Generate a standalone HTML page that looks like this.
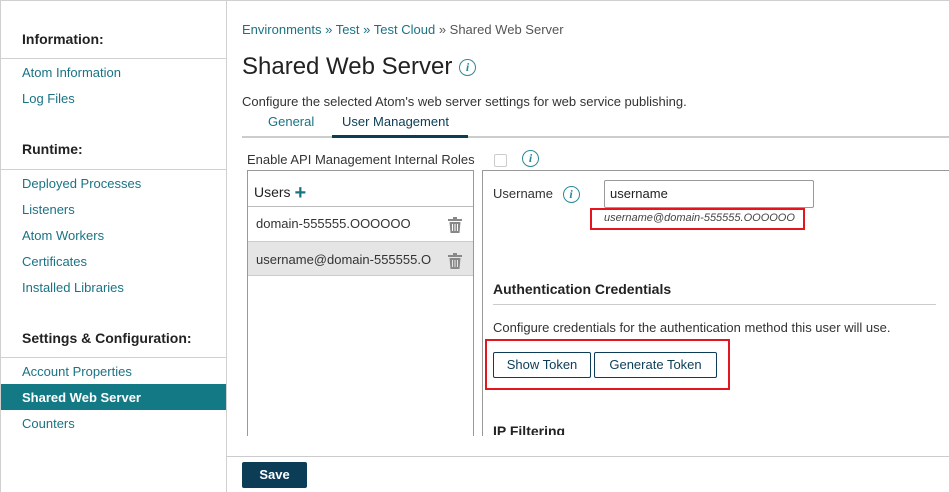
<!DOCTYPE html>
<html><head><style>
*{margin:0;padding:0;box-sizing:border-box}
body{width:949px;height:492px;overflow:hidden;background:#fff;font-family:"Liberation Sans",sans-serif;color:#333;position:relative;font-size:13px}
.a{position:absolute;white-space:nowrap}
.lnk{color:#1a7384}
.h{font-weight:bold;font-size:14px;color:#222}
.side{position:absolute;left:0;top:0;width:227px;height:492px;border-right:1px solid #d0d0d0;border-top:1px solid #d0d0d0;border-left:1px solid #d0d0d0}
.hl{position:absolute;left:0;width:226px;height:1px;background:#d0d0d0}
.info{display:inline-block;width:17px;height:17px;border:1.5px solid #2a8a96;border-radius:50%;color:#2a8a96;font:italic bold 12px "Liberation Serif",serif;text-align:center;line-height:14px;vertical-align:middle}
.btn{position:absolute;border:1px solid #0b3d56;border-radius:2px;color:#0b3d56;font-size:13px;text-align:center;line-height:24px;height:26px}
.red{position:absolute;border:2.5px solid #e3161f}
</style></head><body>
<div style="position:absolute;left:0;top:0;width:949px;height:1px;background:#d0d0d0"></div>
<div class="side">
<div class="a h" style="left:21px;top:30px">Information:</div>
<div class="hl" style="top:57px"></div>
<div class="a lnk" style="left:21px;top:64px">Atom Information</div>
<div class="a lnk" style="left:21px;top:90px">Log Files</div>
<div class="a h" style="left:21px;top:140px">Runtime:</div>
<div class="hl" style="top:168px"></div>
<div class="a lnk" style="left:21px;top:175px">Deployed Processes</div>
<div class="a lnk" style="left:21px;top:201px">Listeners</div>
<div class="a lnk" style="left:21px;top:227px">Atom Workers</div>
<div class="a lnk" style="left:21px;top:253px">Certificates</div>
<div class="a lnk" style="left:21px;top:279px">Installed Libraries</div>
<div class="a h" style="left:21px;top:329px">Settings &amp; Configuration:</div>
<div class="hl" style="top:356px"></div>
<div class="a lnk" style="left:21px;top:363px">Account Properties</div>
<div style="position:absolute;left:0;top:383px;width:225px;height:26px;background:#137a85"></div>
<div class="a" style="left:21px;top:389px;color:#fff;font-weight:bold">Shared Web Server</div>
<div class="a lnk" style="left:21px;top:415px">Counters</div>
</div>
<div class="a" style="left:242px;top:22px"><span class="lnk">Environments » Test » Test Cloud</span> <span style="color:#555">» Shared Web Server</span></div>
<div class="a" style="left:242px;top:53px;font-size:24px;color:#222">Shared Web Server <span class="info" style="vertical-align:3px">i</span></div>
<div class="a" style="left:242px;top:94px">Configure the selected Atom's web server settings for web service publishing.</div>
<div class="a lnk" style="left:268px;top:114px">General</div>
<div class="a" style="left:342px;top:114px;color:#0b3d56">User Management</div>
<div style="position:absolute;left:242px;top:136px;width:707px;height:2px;background:#ccc"></div>
<div style="position:absolute;left:332px;top:135px;width:136px;height:3px;background:#0b3d56"></div>
<div class="a" style="left:247px;top:152px">Enable API Management Internal Roles</div>
<div style="position:absolute;left:494px;top:154px;width:13px;height:13px;border:1px solid #ccc;border-radius:2px"></div>
<div class="a" style="left:522px;top:150px"><span class="info">i</span></div>
<div style="position:absolute;left:247px;top:170px;width:227px;height:266px;border:1px solid #999;border-bottom:none"></div>
<div class="a" style="left:254px;top:182px;font-size:14px;color:#222">Users <span style="color:#1a7384;font-weight:bold;font-size:20px;vertical-align:-2px">+</span></div>
<div style="position:absolute;left:248px;top:206px;width:225px;height:1px;background:#bbb"></div>
<div class="a" style="left:256px;top:216px">domain-555555.OOOOOO</div>
<svg class="a" style="left:448px;top:217px" width="14" height="16" viewBox="0 0 14 16"><rect x="0" y="2" width="14" height="2" fill="#888"/><rect x="5" y="0" width="4" height="2" fill="#888"/><path d="M1.5 5h11l-1 11h-9z" fill="#888"/><path d="M4.5 7v7M7 7v7M9.5 7v7" stroke="#fff" stroke-width="1"/></svg>
<div style="position:absolute;left:248px;top:241px;width:225px;height:35px;background:#e5e5e5;border-top:1px solid #ccc;border-bottom:1px solid #ccc"></div>
<div class="a" style="left:256px;top:252px">username@domain-555555.O</div>
<svg class="a" style="left:448px;top:253px" width="14" height="16" viewBox="0 0 14 16"><rect x="0" y="2" width="14" height="2" fill="#888"/><rect x="5" y="0" width="4" height="2" fill="#888"/><path d="M1.5 5h11l-1 11h-9z" fill="#888"/><path d="M4.5 7v7M7 7v7M9.5 7v7" stroke="#e5e5e5" stroke-width="1"/></svg>
<div style="position:absolute;left:482px;top:170px;width:467px;height:266px;border-left:1px solid #999;border-top:1px solid #999"></div>
<div class="a" style="left:493px;top:186px">Username <span class="info" style="margin-left:6px">i</span></div>
<div style="position:absolute;left:604px;top:180px;width:210px;height:28px;border:1px solid #999;border-radius:2px"></div>
<div class="a" style="left:610px;top:186px;color:#222">username</div>
<div class="red" style="left:590px;top:208px;width:215px;height:22px"></div>
<div class="a" style="left:604px;top:212px;font-style:italic;font-size:11px;color:#444">username@domain-555555.OOOOOO</div>
<div class="a" style="left:493px;top:281px;font-weight:bold;font-size:14px;color:#222">Authentication Credentials</div>
<div style="position:absolute;left:493px;top:304px;width:443px;height:1px;background:#ccc"></div>
<div class="a" style="left:493px;top:320px">Configure credentials for the authentication method this user will use.</div>
<div class="red" style="left:485px;top:339px;width:245px;height:51px"></div>
<div class="btn" style="left:493px;top:352px;width:98px">Show Token</div>
<div class="btn" style="left:594px;top:352px;width:123px">Generate Token</div>
<div style="position:absolute;left:483px;top:420px;width:200px;height:15px;overflow:hidden"><div class="a" style="left:10px;top:3px;font-weight:bold;font-size:14px;color:#222">IP Filtering</div></div>
<div style="position:absolute;left:227px;top:456px;width:722px;height:1px;background:#ccc"></div>
<div style="position:absolute;left:242px;top:462px;width:65px;height:26px;background:#0b3d56;border-radius:2px;color:#fff;font-weight:bold;text-align:center;line-height:26px">Save</div>
</body></html>
